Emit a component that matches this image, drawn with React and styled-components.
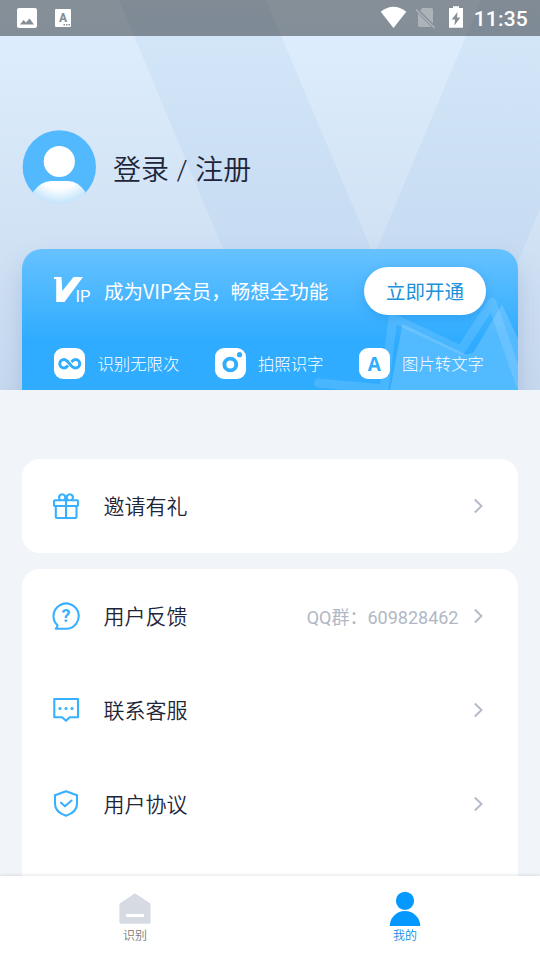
import React from 'react';
import styled, { createGlobalStyle } from 'styled-components'

const GlobalStyle = createGlobalStyle`
    * { box-sizing: border-box; }
    body {
        margin: 0;
        font-family: Roboto, "Noto Sans CJK SC", sans-serif;
        color: #1d2538;
        background: #f1f5fa;
    }
    svg { display: block; flex: none; }
`;

const Screen = styled.div`
    width: 540px;
    height: 960px;
    display: flex;
    flex-direction: column;
    overflow: hidden;
`;

const Hero = styled.header`
    position: relative;
    height: 390px;
    flex: none;
    overflow: hidden;
    background: linear-gradient(#dfeffe, #d0e1f4 64%, #c8d9ee);
`;

const Backdrop = styled.svg`
    position: absolute;
    inset: 0;
`;

const StatusBar = styled.div`
    position: relative;
    height: 36px;
    padding: 0 12px 0 17px;
    display: flex;
    align-items: center;
    justify-content: space-between;
    background: rgba(0, 0, 0, 0.4);
`;

const StatusGroup = styled.div`
    display: flex;
    align-items: center;
    gap: 10px;
`;

const Clock = styled.span`
    padding-top: 2px;
    color: #fff;
    font-size: 21px;
    font-weight: 500;
    letter-spacing: 0.2px;
`;

const Profile = styled.div`
    position: relative;
    display: flex;
    align-items: center;
    gap: 17px;
    margin: 94px 0 0 22px;
    height: 75px;
`;

const Login = styled.span`
    padding-top: 6px;
    font-family: Roboto, "Noto Sans CJK SC", sans-serif;
    font-size: 28px;
    font-weight: 350;
    line-height: 40px;
    word-spacing: 0.8px;
    white-space: pre;
`;

const VipCard = styled.section`
    position: relative;
    height: 190px;
    margin: 44px 22px 0;
    border-radius: 20px;
    overflow: hidden;
    background: linear-gradient(#66c2ff, #2facff 48%, #31adff);
`;

const CardShadow = styled.div`
    border-radius: 20px;
    position: absolute;
    inset: 249px 22px -50px;
    box-shadow: 0 14px 24px rgba(70, 120, 180, 0.25);
`;

const CrownArt = styled.svg`
    position: absolute;
    top: 0;
    right: 0;
`;

const VipTop = styled.div`
    position: relative;
    display: flex;
    align-items: center;
    height: 48px;
    margin: 18px 32px 0 32px;
`;

const VipTitle = styled.span`
    margin-left: 9px;
    color: #fff;
    font-family: "Noto Sans CJK SC", sans-serif;
    font-size: 19.5px;
    line-height: 28px;
    white-space: nowrap;
`;

const OpenButton = styled.button`
    margin-left: auto;
    width: 122px;
    height: 48px;
    padding: 0 0 1px;
    border: 0;
    border-radius: 24px;
    background: #fff;
    color: #1c90d8;
    font-family: "Noto Sans CJK SC", sans-serif;
    font-size: 19.5px;
    box-shadow: 0 3px 10px rgba(0, 110, 200, 0.25);
`;

const Perks = styled.div`
    position: relative;
    display: flex;
    justify-content: space-between;
    margin: 33px 34px 0 32px;
`;

const Perk = styled.div`
    display: flex;
    align-items: center;
    gap: 12.4px;
    height: 31px;
`;

const PerkLabel = styled.span`
    padding-bottom: 2px;
    color: #fff;
    font-family: "Noto Sans CJK SC", sans-serif;
    font-size: 16.4px;
    font-weight: 300;
    line-height: 24px;
    white-space: nowrap;
`;

const Body = styled.main`
    flex: 1;
    min-height: 0;
    overflow: hidden;
    padding: 69px 22px 0;
    display: flex;
    flex-direction: column;
    gap: 16px;
`;

const Panel = styled.section`
    flex: none;
    padding: 0 34px 0 30px;
    border-radius: 18px;
    background: #fff;
    height: ${({ $tall }) => $tall ? '376px' : '94px'};
`;

const Row = styled.div`
    display: flex;
    align-items: center;
    height: 94px;
`;

const RowLabel = styled.span`
    margin-left: 23.5px;
    margin-right: auto;
    padding-bottom: 2px;
    font-family: "Noto Sans CJK SC", sans-serif;
    font-size: 21px;
    font-weight: 350;
    line-height: 30px;
`;

const RowNote = styled.span`
    margin-right: 15.5px;
    color: #b1b8c5;
    font-size: 18px;
`;

const TabBar = styled.nav`
    position: relative;
    flex: none;
    display: flex;
    height: 84px;
    background: #fff;
    box-shadow: 0 -1px 3px rgba(0, 0, 0, 0.1);
`;

const Tab = styled.div`
    flex: 1;
    display: flex;
    flex-direction: column;
    align-items: center;
    padding-top: 15px;
    font-family: "Noto Sans CJK SC", sans-serif;
    font-size: 12px;
    font-weight: 350;
    line-height: 18px;
    color: ${({ $active }) => $active ? '#0c8fe8' : '#7a7a7a'};
`;

const LineIcon = styled.svg.attrs({
    width: 28,
    height: 28,
    viewBox: '0 0 28 28'
})`
    fill: none;
    stroke: #37b0ff;
    stroke-width: 2.1;
    stroke-linejoin: round;
    stroke-linecap: round;
`;

const Rays = () => (
    <Backdrop width="540" height="390">
        <defs>
            <linearGradient id="ray" x1="0" y1="0" x2="0" y2="1">
                <stop offset="0" stopColor="#a9c9e6" stopOpacity="0.18" />
                <stop offset="0.6" stopColor="#a9c9ea" stopOpacity="0.24" />
            </linearGradient>
        </defs>
        <path d="M119 0H266L374 256L481 0H628L464 390H282Z" fill="url(#ray)" />
    </Backdrop>
)

const Notifications = () => (
    <svg width="56" height="22" viewBox="17 7 56 22" fill="#fff">
        <path fillRule="evenodd" d="M19 8h16q2 0 2 2v16q0 2-2 2H19q-2 0-2-2V10q0-2 2-2zM20 24.500h14l-4.500-6-3.500 4-2.500-2.500z" />
        <rect x="55" y="9" width="16" height="18" rx="1" />
        <text x="63" y="22" textAnchor="middle" fontSize="12" fontWeight="800" fill="#858e97">A</text>
        <path d="M63.500 24h1.500v1.500h-1.500zM66 24h1.500v1.500h-1.500zM68.500 24h1.500v1.500h-1.500z" fill="#858e97" />
    </svg>
)

const Signals = () => (
    <svg width="84" height="24" viewBox="380 6 84 24" fill="#fff">
        <path d="M380.700 11.700Q393.500 2 406.300 11.700L393.500 28z" />
        <g opacity="0.32">
            <path d="M422.500 8H431.500q1.500 0 1.500 1.500V23.500L420 10.500zM418 13.500L431.500 27H420q-2 0-2-2z" />
            <path d="M416 9.500L434.700 28" stroke="#fff" strokeWidth="1.600" />
        </g>
        <path fillRule="evenodd" d="M449 8H453V6.200H459V8H463V27.700H449zM457.500 12L451.700 19.500H455L454.500 25.500L460.300 17.500H457z" />
    </svg>
)

const Avatar = () => (
    <svg width="74" height="75" viewBox="0 0 74 75">
        <defs>
            <clipPath id="face"><circle cx="37.300" cy="37" r="36.700" /></clipPath>
            <radialGradient id="shirt" cx="37.300" cy="34" r="39.500" gradientUnits="userSpaceOnUse">
                <stop offset="0.62" stopColor="#fff" />
                <stop offset="1" stopColor="#c3e4fc" />
            </radialGradient>
        </defs>
        <g clipPath="url(#face)">
            <rect width="74" height="64" fill="#52b9ff" />
            <circle cx="37.300" cy="31.500" r="15.600" fill="#fff" />
            <path d="M10.500 62.500Q19 51 29 51H46Q56 51 64 62.500V75H10.500z" fill="url(#shirt)" />
        </g>
    </svg>
)

const Crown = () => (
    <CrownArt width="208" height="141" viewBox="310 249 208 141">
        <path d="M402.500 324L466 354.500L473 353L502 304.500L519 341V391H390z" fill="#fff" fillOpacity="0.17" />
        <path d="M318.500 383L384 389L393 318L461 350L492 302.500L520 384" fill="none" stroke="#fff" strokeOpacity="0.12" strokeWidth="9" strokeLinejoin="round" strokeLinecap="round" />
    </CrownArt>
)

const VipLogo = () => (
    <svg width="41" height="28" viewBox="54 277 41 28" fill="#fff">
        <path d="M54 277H61.500L62.300 291L73.500 277H83L64.500 302H56.200V279H54z" />
        <text x="75.500" y="302" fontFamily="Roboto, sans-serif" fontSize="16.500">IP</text>
    </svg>
)

const Tile = ({ children }) => (
    <svg width="31" height="31" viewBox="0 0 31 31" fill="none" stroke="#31adff">
        <rect width="31" height="31" rx="9" fill="#fff" stroke="none" />
        {children}
    </svg>
)

const Arrow = () => (
    <svg width="10" height="16" viewBox="0 0 10 16">
        <path d="M0.800 1.500L7.500 8L0.800 14.500" fill="none" stroke="#b3bac7" strokeWidth="1.900" />
    </svg>
)

export default function App() {
    return (
        <>
            <GlobalStyle />
            <Screen>
                <Hero>
                    <Rays />
                    <CardShadow />
                    <StatusBar>
                        <Notifications />
                        <StatusGroup>
                            <Signals />
                            <Clock>11:35</Clock>
                        </StatusGroup>
                    </StatusBar>
                    <Profile>
                        <Avatar />
                        <Login>登录 / 注册</Login>
                    </Profile>
                    <VipCard>
                        <Crown />
                        <VipTop>
                            <VipLogo />
                            <VipTitle>成为VIP会员，畅想全功能</VipTitle>
                            <OpenButton>立即开通</OpenButton>
                        </VipTop>
                        <Perks>
                            <Perk>
                                <Tile>
                                    <path d="M14 17.500C12.500 19.500 11.500 20 10 20A4.200 4.200 0 0 1 10 11.500C14.500 11.500 16.500 20 21.500 20A4.200 4.200 0 0 0 21.500 11.500C20 11.500 19 12 17.500 14" strokeWidth="3" />
                                </Tile>
                                <PerkLabel>识别无限次</PerkLabel>
                            </Perk>
                            <Perk>
                                <Tile>
                                    <circle cx="15.300" cy="16.500" r="5.900" strokeWidth="3.900" />
                                    <circle cx="24.500" cy="6.700" r="2.600" fill="#31adff" stroke="none" />
                                </Tile>
                                <PerkLabel>拍照识字</PerkLabel>
                            </Perk>
                            <Perk>
                                <Tile>
                                    <text x="15.300" y="22.500" textAnchor="middle" fontFamily="'Open Sans', sans-serif" fontSize="19" fontWeight="700" fill="#31adff" stroke="none">A</text>
                                </Tile>
                                <PerkLabel>图片转文字</PerkLabel>
                            </Perk>
                        </Perks>
                    </VipCard>
                </Hero>
                <Body>
                    <Panel>
                        <Row>
                            <LineIcon>
                                <rect x="2" y="8.200" width="24" height="5.800" rx="1" />
                                <path d="M3.800 14V25q0 1 1 1H23.500q1 0 1-1V14M14 8V26" />
                                <path d="M12.500 7.500A3.100 3.100 0 1 0 7.300 6.500M15.500 7.500A3.100 3.100 0 1 1 20.700 6.500M7.300 6.500L8 8M20.700 6.500L20 8" />
                            </LineIcon>
                            <RowLabel>邀请有礼</RowLabel>
                            <Arrow />
                        </Row>
                    </Panel>
                    <Panel $tall>
                        <Row>
                            <LineIcon>
                                <path d="M5.500 23.300A12.600 12.600 0 1 1 14 26.700H3.800Q5.500 25.500 5.500 23.300z" />
                                <text x="14" y="20.200" textAnchor="middle" fontSize="18" fontWeight="700" fill="#37b0ff" stroke="none">?</text>
                            </LineIcon>
                            <RowLabel>用户反馈</RowLabel>
                            <RowNote>QQ群：609828462</RowNote>
                            <Arrow />
                        </Row>
                        <Row>
                            <LineIcon>
                                <path d="M2.300 3H26V21.200H17.800L14 24.700L10.200 21.200H2.300z" />
                                <path d="M8 12.500h.01M14 12.500h.01M20 12.500h.01" strokeWidth="3.200" />
                            </LineIcon>
                            <RowLabel>联系客服</RowLabel>
                            <Arrow />
                        </Row>
                        <Row>
                            <LineIcon>
                                <path d="M14 1.200L25 5.200V14Q25 22 14 25.800Q3 22 3 14V5.200z" />
                                <path d="M9 12.800L13 16.300L19.500 10.500" />
                            </LineIcon>
                            <RowLabel>用户协议</RowLabel>
                            <Arrow />
                        </Row>
                    </Panel>
                </Body>
                <TabBar>
                    <Tab>
                        <svg width="34" height="35" viewBox="0 0 34 35" fill="#d6dae3">
                            <path d="M15.500 3.200Q17 2 18.500 3.200L31.700 12Q32.600 12.800 32.600 14V31q0 1.700-1.700 1.700H3.100Q1.400 32.700 1.400 31V14Q1.400 12.800 2.300 12z" />
                            <rect x="8" y="23" width="18" height="3" fill="#fff" />
                        </svg>
                        识别
                    </Tab>
                    <Tab $active>
                        <svg width="34" height="35" viewBox="0 0 34 35" fill="#0599ff">
                            <circle cx="17" cy="9.800" r="9.100" />
                            <path d="M1.700 35A15.300 15 0 0 1 32.300 35z" />
                        </svg>
                        我的
                    </Tab>
                </TabBar>
            </Screen>
        </>
    )
}
